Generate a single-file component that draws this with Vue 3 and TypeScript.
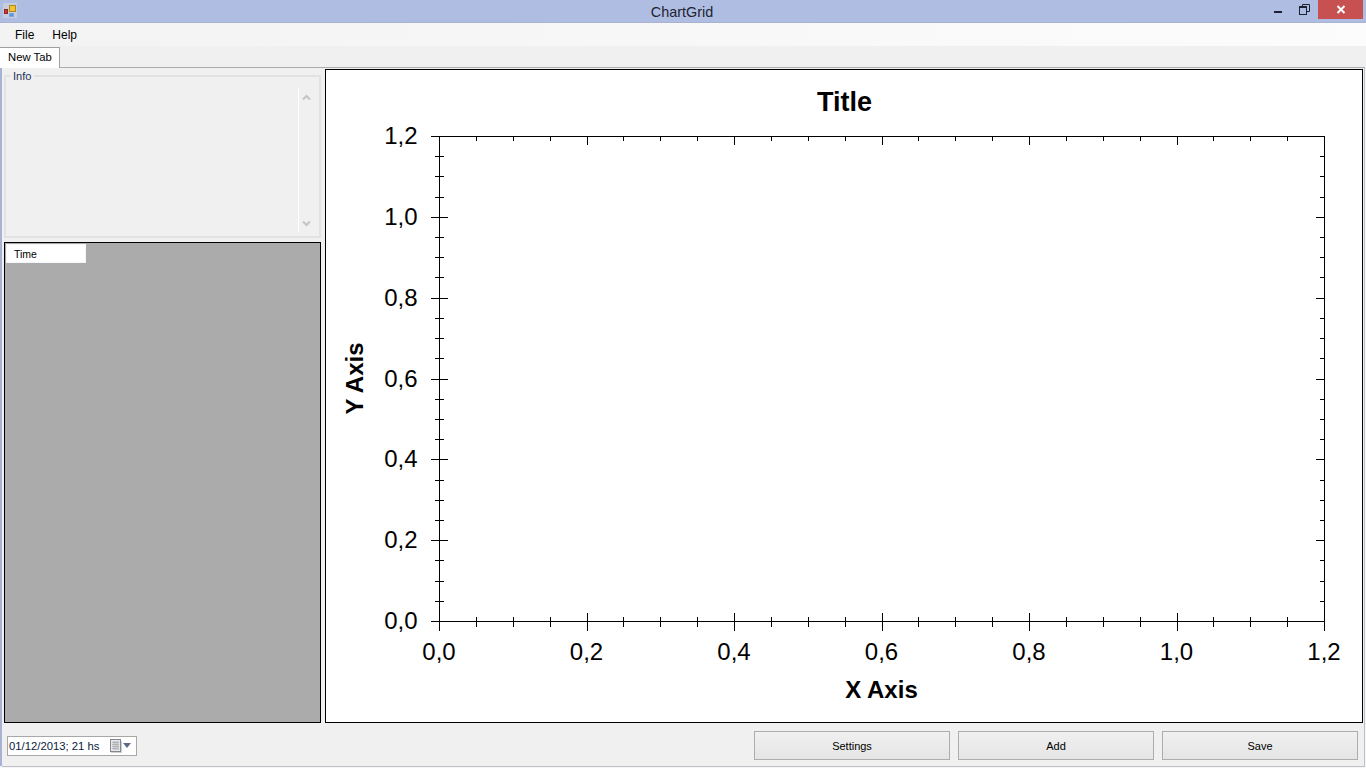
<script setup lang="ts">
const L = 439, R = 1324, T = 136, B = 621
const xMajor = [0, 1, 2, 3, 4, 5, 6].map(i => L + (R - L) * i / 6)
const yMajor = [0, 1, 2, 3, 4, 5, 6].map(i => B - (B - T) * i / 6)
const xMinor: number[] = []
for (let i = 0; i < 24; i++) if (i % 4) xMinor.push(L + (R - L) * i / 24)
const yMinor: number[] = []
for (let i = 0; i < 24; i++) if (i % 4) yMinor.push(B - (B - T) * i / 24)
const labels = ['0,0', '0,2', '0,4', '0,6', '0,8', '1,0', '1,2']
// chart svg origin is the chart box's inner top-left (326, 70)
const ox = 326
const oy = 70
</script>

<template>
  <div class="window">
    <header class="titlebar">
      <svg class="appicon" width="20" height="20" viewBox="0 0 20 20">
        <rect x="3" y="3" width="14" height="15" fill="#c6cede" />
        <rect x="9.5" y="5.5" width="6" height="6" fill="#f2c230" stroke="#b08a1c" />
        <rect x="4.5" y="9.5" width="3" height="4" fill="#d8342a" stroke="#8f2a22" />
        <rect x="9.5" y="13.5" width="4" height="3" fill="#5a94e0" stroke="#7fa6dc" />
      </svg>
      <div class="title">ChartGrid</div>
      <div class="winbtns">
        <svg class="minb" width="8" height="3" viewBox="0 0 8 3"><rect width="8" height="2" y="0" fill="#1d2230" /></svg>
        <svg class="maxb" width="11" height="11" viewBox="0 0 11 11">
          <path d="M3.5 2.5V.5h7v7H8" fill="none" stroke="#1d2230" />
          <rect x=".5" y="2.5" width="7" height="8" fill="none" stroke="#1d2230" />
          <rect x="1" y="3" width="6" height="1" fill="#1d2230" />
        </svg>
        <div class="close">
          <svg width="10" height="9" viewBox="0 0 10 9"><path d="M1.5 1l7 7M8.5 1l-7 7" stroke="#fff" stroke-width="2" /></svg>
        </div>
      </div>
    </header>
    <nav class="menubar">
      <span>File</span>
      <span>Help</span>
    </nav>
    <div class="tabstrip">
      <div class="tab">New Tab</div>
    </div>
    <main class="tabpage">
      <div class="upper">
        <aside class="left">
          <div class="info">
            <span class="infolabel">Info</span>
            <div class="scrolltrack">
              <svg width="9" height="7" viewBox="0 0 9 7"><path d="M1 5.5l3.5-3.5L8 5.5" fill="none" stroke="#c4c4c4" stroke-width="2" /></svg>
              <svg width="9" height="7" viewBox="0 0 9 7"><path d="M1 1.5L4.5 5 8 1.5" fill="none" stroke="#c4c4c4" stroke-width="2" /></svg>
            </div>
          </div>
          <div class="grid">
            <div class="gridhead">Time</div>
          </div>
        </aside>
        <section class="chart">
          <svg width="1036" height="652" :viewBox="`${ox} ${oy} 1036 652`" shape-rendering="crispEdges">
            <rect :x="L + .5" :y="T + .5" :width="R - L" :height="B - T" fill="none" stroke="#000" />
            <g stroke="#000" stroke-width="1">
              <template v-for="x in xMajor" :key="'xM' + x">
                <line :x1="Math.round(x) + .5" :x2="Math.round(x) + .5" :y1="B - 8" :y2="B + 10" />
                <line :x1="Math.round(x) + .5" :x2="Math.round(x) + .5" :y1="T" :y2="T + 9" />
              </template>
              <template v-for="x in xMinor" :key="'xm' + x">
                <line :x1="Math.round(x) + .5" :x2="Math.round(x) + .5" :y1="B - 4" :y2="B + 6" />
                <line :x1="Math.round(x) + .5" :x2="Math.round(x) + .5" :y1="T" :y2="T + 5" />
              </template>
              <template v-for="y in yMajor" :key="'yM' + y">
                <line :x1="L - 8" :x2="L + 9" :y1="Math.round(y) + .5" :y2="Math.round(y) + .5" />
                <line :x1="R - 8" :x2="R" :y1="Math.round(y) + .5" :y2="Math.round(y) + .5" />
              </template>
              <template v-for="y in yMinor" :key="'ym' + y">
                <line :x1="L - 4" :x2="L + 5" :y1="Math.round(y) + .5" :y2="Math.round(y) + .5" />
                <line :x1="R - 4" :x2="R" :y1="Math.round(y) + .5" :y2="Math.round(y) + .5" />
              </template>
            </g>
            <g class="ticklabel">
              <text v-for="(t, i) in labels" :key="'xl' + i" :x="xMajor[i]" y="660" text-anchor="middle">{{ t }}</text>
              <text v-for="(t, i) in labels" :key="'yl' + i" x="417.5" :y="Math.round(yMajor[i]) + 8" text-anchor="end">{{ t }}</text>
            </g>
            <g class="axistitle">
              <text x="844.5" y="111" text-anchor="middle" class="big">Title</text>
              <text x="881.5" y="698" text-anchor="middle">X Axis</text>
              <text transform="translate(363 378.5) rotate(-90)" text-anchor="middle">Y Axis</text>
            </g>
          </svg>
        </section>
      </div>
      <footer class="bottom">
        <div class="date">
          <span>01/12/2013; 21 hs</span>
          <svg width="21" height="14" viewBox="0 0 21 14">
            <rect x="1" y="2" width="11" height="12" fill="#d0d0d4" />
            <rect x=".5" y=".5" width="10" height="12" fill="#e6e7ea" stroke="#85878d" />
            <path d="M2 3.5h7M2 5.5h7M2 7.5h7M2 9.5h7M4 2v9M6 2v9M8 2v9" stroke="#b2b4ba" />
            <path d="M13 4h8l-4 5z" fill="#5c6a88" />
          </svg>
        </div>
        <div class="buttons">
          <button type="button">Settings</button>
          <button type="button">Add</button>
          <button type="button">Save</button>
        </div>
      </footer>
    </main>
  </div>
</template>

<style>
html, body { margin: 0; padding: 0; overflow: hidden; }
</style>

<style scoped>
.window {
  width: 1366px;
  height: 768px;
  display: flex;
  flex-direction: column;
  background: #f4f6fb;
  font-family: "Liberation Sans", sans-serif;
  font-size: 12px;
  color: #000;
  overflow: hidden;
  position: relative;
}
.titlebar {
  height: 22px;
  flex: none;
  position: relative;
  display: flex;
  align-items: center;
  justify-content: center;
  background: #b0bde3;
}
.appicon { position: absolute; left: 0; top: 0; }
.title { font-size: 14.4px; color: #20242f; margin-top: 2px; margin-right: 2px; }
.winbtns {
  position: absolute;
  right: 3px;
  top: 0;
  height: 19px;
  display: flex;
  align-items: flex-start;
}
.minb { margin-right: 17px; margin-top: 11px; }
.maxb { margin-right: 8px; margin-top: 4px; }
.close {
  width: 45px;
  height: 19px;
  background: #c75050;
  display: flex;
  align-items: center;
  justify-content: center;
}
.menubar {
  height: 24px;
  flex: none;
  box-sizing: border-box;
  background: linear-gradient(90deg, #f3f3f3, #fcfcfc);
  border-top: 1px solid #a9b3cf;
  display: flex;
  align-items: center;
  padding-left: 15px;
  gap: 18px;
  font-size: 12px;
}
.tabstrip {
  height: 21px;
  flex: none;
  background: #f0f0f0;
  display: flex;
  align-items: flex-end;
  position: relative;
  z-index: 1;
}
.tab {
  width: 60px;
  height: 21px;
  box-sizing: border-box;
  background: #fff;
  border: 1px solid #a0a0a0;
  border-left: none;
  border-bottom: none;
  font-size: 11.3px;
  line-height: 18px;
  padding-left: 8px;
  position: relative;
  top: 1px;
}
.tabpage {
  flex: 1;
  min-height: 0;
  margin-left: 2px;
  margin-right: 1px;
  margin-bottom: 1px;
  box-sizing: border-box;
  background: #f0f0f0;
  border-top: 1px solid #acacac;
  border-right: 1px solid #c0c0c0;
  border-bottom: 1px solid #c0c0c0;
  display: flex;
  flex-direction: column;
}
.window::before {
  content: "";
  position: absolute;
  left: 0;
  top: 68px;
  bottom: 2px;
  width: 2px;
  background: #a7b2d4;
}
.upper {
  height: 654px;
  flex: none;
  display: flex;
  padding: 1px 0 0 2px;
  gap: 4px;
}
.left {
  width: 317px;
  display: flex;
  flex-direction: column;
  gap: 4px;
}
.info {
  height: 163px;
  flex: none;
  box-sizing: border-box;
  margin-top: 6px;
  border: 2px solid #e2e2e2;
  position: relative;
}
.infolabel {
  position: absolute;
  left: 4px;
  top: -7px;
  padding: 0 3px;
  background: #f0f0f0;
  font-size: 11px;
  line-height: 13px;
  color: #1c3060;
}
.scrolltrack {
  position: absolute;
  right: 0;
  top: 11px;
  bottom: 4px;
  width: 21px;
  border-left: 1px solid #fff;
  display: flex;
  flex-direction: column;
  justify-content: space-between;
  align-items: center;
  padding: 6px 5px 5px 0;
  box-sizing: border-box;
}
.grid {
  flex: 1;
  background: #ababab;
  border: 1px solid #000;
  padding: 1px;
}
.gridhead {
  width: 80px;
  height: 19px;
  box-sizing: border-box;
  background: #fff;
  border: 1px solid #f4f6fb;
  font-size: 10.5px;
  line-height: 18px;
  padding-left: 7px;
}
.chart {
  width: 1038px;
  height: 654px;
  box-sizing: border-box;
  background: #fff;
  border: 1px solid #000;
}
.chart svg { display: block; }
.ticklabel text {
  font: 24px "Liberation Sans", sans-serif;
  fill: #000;
}
.axistitle text {
  font: bold 24px "Liberation Sans", sans-serif;
  fill: #000;
}
.axistitle text.big { font-size: 27px; }
.bottom {
  flex: 1;
  display: flex;
  align-items: center;
  justify-content: space-between;
  padding: 2px 6px 0 5px;
}
.date {
  width: 130px;
  height: 20px;
  box-sizing: border-box;
  background: #fff;
  border: 1px solid #a8a8a8;
  display: flex;
  align-items: center;
  justify-content: space-between;
  padding: 0 5px 0 1px;
  font-size: 11.3px;
  color: #0a1a40;
}
.buttons { display: flex; gap: 8px; }
button {
  width: 196px;
  height: 29px;
  box-sizing: border-box;
  border: 1px solid #adadad;
  background: linear-gradient(#f0f0f0, #e5e5e5);
  font: 11px "Liberation Sans", sans-serif;
  color: #000;
  padding: 0;
}
</style>
